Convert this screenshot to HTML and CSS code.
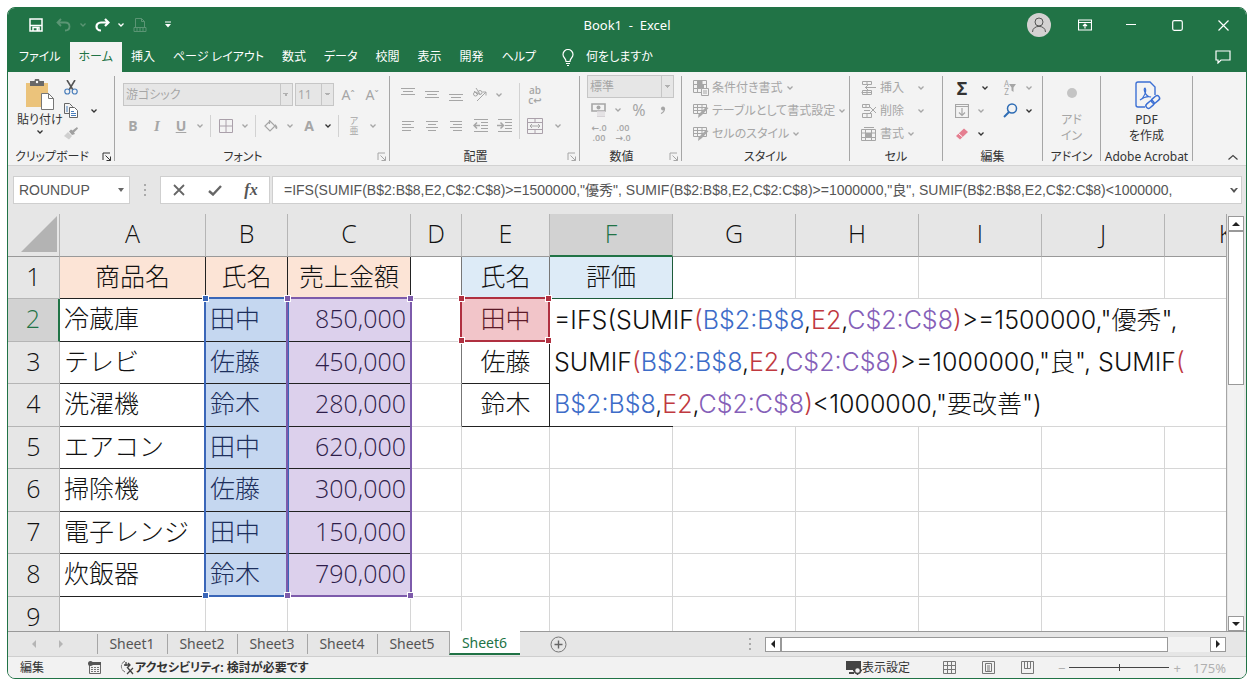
FILE: index.html
```html
<!DOCTYPE html>
<html lang="ja">
<head>
    <meta charset="UTF-8">
    <meta name="viewport" content="width=device-width, initial-scale=1.0">
    <title>Book1 - Excel</title>
    <link rel="stylesheet" href="styles.css">
</head>
<body>

    <!-- Shared icons -->
    <svg class="sprite" aria-hidden="true">
        <symbol id="chev" viewBox="0 0 8 8"><path d="M1.5 2.5 4 5l2.500-2.500" fill="none" stroke="currentColor" stroke-width="1.300"/></symbol>
        <symbol id="launch" viewBox="0 0 10 10"><path d="M1 8V1h7M3.500 3.500l5 5M8.500 4.500v4h-4" fill="none" stroke="currentColor"/></symbol>
        <symbol id="table-pen" viewBox="0 0 16 16"><path d="M.5 1.500h13v9H.5zM.5 4.500h13M.5 7.500h13M4.500 1.500v9M9 1.500v9" fill="none" stroke="currentColor"/><path d="M15.500 5 9 12l-4 3 .5-3.500L13 4z" fill="#a8a8a8"/></symbol>
    </svg>

    <div class="window">
        <header class="titlebar">
            <div class="quick">
                <button aria-label="上書き保存"><svg width="14" height="14" viewBox="0 0 14 14"><path d="M1 1h12v12H1z" fill="none" stroke="#fff" stroke-width="1.500"/><path d="M1 7.500h12M4 13V9.500h6V13" fill="none" stroke="#fff" stroke-width="1.500"/><path d="M7.500 10h1.500v3H7.500z" fill="#fff"/></svg></button>
                <button class="undo faded" aria-label="元に戻す"><svg width="16" height="14" viewBox="0 0 16 14"><path d="M5 1 1.500 4.500 5 8M2 4.500h7c6 0 6 8 0 8" fill="none" stroke="currentColor" stroke-width="1.800"/></svg></button>
                <button class="arrow faded" aria-label="元に戻す一覧"><svg width="8" height="8"><use href="#chev"/></svg></button>
                <button aria-label="やり直し"><svg width="16" height="14" viewBox="0 0 16 14"><path d="M11 1l3.500 3.500L11 8M14 4.500H7c-6 0-6 8 0 8" fill="none" stroke="#fff" stroke-width="2.200"/></svg></button>
                <button class="arrow" aria-label="やり直し一覧"><svg width="8" height="8"><use href="#chev"/></svg></button>
                <button class="faded" aria-label="PDF"><svg width="14" height="16" viewBox="0 0 14 16"><path d="M2.500 10V1.500h6l3 3V10M8.500 1.500v3h3M1 10.500h12v4H1zM4 10.500v4M7 10.500v4M10 10.500v4" fill="none" stroke="currentColor"/></svg></button>
                <button class="more" aria-label="カスタマイズ"><svg width="6" height="8" viewBox="0 0 6 8"><path d="M0 1h6" stroke="#fff"/><path d="M0 3h6L3 6.500z" fill="#fff"/></svg></button>
            </div>
            <div class="doc-name">Book1&nbsp; -&nbsp; Excel</div>
            <div class="controls">
                <button class="avatar" aria-label="アカウント"><svg width="24" height="24" viewBox="0 0 24 24"><circle cx="12" cy="12" r="12" fill="#d4d2d2"/><circle cx="12" cy="9" r="4" fill="none" stroke="#555"/><path d="M5.500 19c0-7.500 13-7.500 13 0" fill="none" stroke="#555"/></svg></button>
                <button aria-label="リボンの表示"><svg width="14" height="12" viewBox="0 0 14 12"><path d="M.5 1h13v10H.5zM.5 3.500h13M7 9.500v-4M5 7l2-2 2 2" fill="none" stroke="#fff" stroke-width="1.200"/></svg></button>
                <button aria-label="最小化"><svg width="10" height="10"><path d="M0 4.500h10" stroke="#fff" stroke-width="1.200"/></svg></button>
                <button aria-label="最大化"><svg width="11" height="11" viewBox="0 0 11 11"><rect x=".7" y=".7" width="9.600" height="9.600" rx="1.500" fill="none" stroke="#fff" stroke-width="1.200"/></svg></button>
                <button aria-label="閉じる"><svg width="11" height="11" viewBox="0 0 11 11"><path d="m.5.5 10 10m0-10-10 10" stroke="#fff" stroke-width="1.200"/></svg></button>
            </div>
        </header>

        <nav class="tabs">
            <a href="#">ファイル</a>
            <a href="#" class="active">ホーム</a>
            <a href="#">挿入</a>
            <a href="#">ページ レイアウト</a>
            <a href="#">数式</a>
            <a href="#">データ</a>
            <a href="#">校閲</a>
            <a href="#">表示</a>
            <a href="#">開発</a>
            <a href="#">ヘルプ</a>
            <a href="#" class="tell-me"><svg width="12" height="17" viewBox="0 0 12 17"><path d="M4 12.500C4 9 1 9 1 5.500a5 5 0 0 1 10 0C11 9 8 9 8 12.500zM4 14.500h4M5 16.500h2" fill="none" stroke="#fff" stroke-width="1.200"/></svg>何をしますか</a>
            <button class="comment" aria-label="コメント"><svg width="16" height="14" viewBox="0 0 16 14"><path d="M1 1h14v9H6l-3 3v-3H1z" fill="none" stroke="#fff" stroke-width="1.200"/></svg></button>
        </nav>

        <section class="ribbon">
            <div class="group g-clipboard">
                <div class="tools">
                    <button class="big">
                        <svg width="30" height="31" viewBox="0 0 30 31"><path d="M1 4h22v24H1z" fill="#ebc37b"/><path d="M5 2h4.500a2.500 2.500 0 0 1 5 0H19v5H5z" fill="#686868"/><circle cx="12" cy="3" r="1.200" fill="#fff"/><path d="M16.500 14.500h7l5 5v11h-12z" fill="#fff" stroke="#777"/><path d="M23.500 14.500v5h5" fill="none" stroke="#777"/></svg>
                        <span>貼り付け</span>
                        <svg width="8" height="8"><use href="#chev"/></svg>
                    </button>
                    <div class="stack">
                        <div class="row"><button aria-label="切り取り"><svg width="14" height="15" viewBox="0 0 14 15"><path d="M3 0l6 10M11 0 5 10" stroke="#555" stroke-width="1.600"/><circle cx="3.300" cy="11.500" r="2.500" fill="none" stroke="#4a7ebb" stroke-width="1.200"/><circle cx="10.700" cy="11.500" r="2.500" fill="none" stroke="#4a7ebb" stroke-width="1.200"/></svg></button></div>
                        <div class="row"><button aria-label="コピー"><svg width="14" height="15" viewBox="0 0 14 15"><path d="M.5.5h5l3 3v7h-8z" fill="#f3f3f3" stroke="#666"/><path d="M5.500 4.500h5l3 3v7h-8z" fill="#fff" stroke="#666"/><path d="M2 4h2M2 6h2M2 8h2M7 8.500h3M7 10.500h5M7 12.500h5" stroke="#4a7ebb"/></svg></button><button class="arrow" aria-label="コピー一覧"><svg width="8" height="8"><use href="#chev"/></svg></button></div>
                        <div class="row"><button aria-label="書式のコピー"><svg width="14" height="13" viewBox="0 0 14 13"><path d="M13 0l1 1.500-4 4 1 1.500-3 1-3-3.500 2-2 1.500 1z" fill="#a0a0a0"/><path d="m4 5 4 4-3 3.500L0 9z" fill="#cfcfcf"/></svg></button></div>
                    </div>
                </div>
                <div class="caption">クリップボード</div>
                <button class="launcher" aria-label="クリップボードの設定"><svg width="10" height="10"><use href="#launch"/></svg></button>
            </div>

            <div class="group g-font off">
                <div class="tools column">
                    <div class="row">
                        <select class="font-name" aria-label="フォント"><option>游ゴシック</option></select>
                        <select class="font-size" aria-label="フォント サイズ"><option>11</option></select>
                        <button class="glyph grow">A<sup>ˆ</sup></button>
                        <button class="glyph grow">A<sup>ˇ</sup></button>
                    </div>
                    <div class="row">
                        <button class="glyph bold">B</button>
                        <button class="glyph italic">I</button>
                        <button class="glyph under">U</button>
                        <button class="arrow" aria-label="下線"><svg width="8" height="8"><use href="#chev"/></svg></button>
                        <i class="sep"></i>
                        <button aria-label="罫線"><svg width="14" height="14"><path d="M.5.5h13v13H.5zM7 0v14M0 7h14" fill="none" stroke="#aaa0aa"/></svg></button>
                        <button class="arrow" aria-label="罫線一覧"><svg width="8" height="8"><use href="#chev"/></svg></button>
                        <i class="sep"></i>
                        <button aria-label="塗りつぶし"><svg width="14" height="14" viewBox="0 0 14 14"><path d="M5.500 1v4M1 7l5-5 5 5-5 5z" fill="none" stroke="currentColor" stroke-width="1.200"/><path d="M11 5c2 2 3 3 2 5-2 0-2-2-2-5z" fill="currentColor"/></svg></button>
                        <button class="arrow" aria-label="塗りつぶし一覧"><svg width="8" height="8"><use href="#chev"/></svg></button>
                        <button class="glyph bold">A</button>
                        <button class="arrow on" aria-label="文字の色"><svg width="8" height="8"><use href="#chev"/></svg></button>
                        <i class="sep"></i>
                        <button class="ruby"><span>ア</span><span>亜</span></button>
                        <button class="arrow" aria-label="ふりがな"><svg width="8" height="8"><use href="#chev"/></svg></button>
                    </div>
                </div>
                <div class="caption">フォント</div>
                <button class="launcher" aria-label="フォントの設定"><svg width="10" height="10"><use href="#launch"/></svg></button>
            </div>

            <div class="group g-align off">
                <div class="tools">
                    <div class="column">
                        <div class="row">
                            <button aria-label="上揃え"><svg width="14" height="14"><path d="M0 .5h14M2 3.500h10M0 6.500h14" stroke="currentColor"/></svg></button>
                            <button aria-label="上下中央揃え"><svg width="14" height="14"><path d="M0 3.500h14M2 6.500h10M0 9.500h14" stroke="currentColor"/></svg></button>
                            <button aria-label="下揃え"><svg width="14" height="14"><path d="M0 6.500h14M2 9.500h10M0 12.500h14" stroke="currentColor"/></svg></button>
                            <button aria-label="方向"><svg width="16" height="14" viewBox="0 0 16 14"><circle cx="3.500" cy="6" r="2" fill="none" stroke="currentColor"/><circle cx="8" cy="4.500" r="2" fill="none" stroke="currentColor"/><path d="M2 3l4 4M4 0l4 6M5 13l9-9M10.500 4H14v3.500" fill="none" stroke="currentColor"/></svg></button>
                            <button class="arrow" aria-label="方向一覧"><svg width="8" height="8"><use href="#chev"/></svg></button>
                        </div>
                        <div class="row">
                            <button aria-label="左揃え"><svg width="12" height="12"><path d="M0 1.500h12M0 4.500h9M0 7.500h12M0 10.500h9" stroke="currentColor"/></svg></button>
                            <button aria-label="中央揃え"><svg width="12" height="12"><path d="M0 1.500h12M2 4.500h8M0 7.500h12M2 10.500h8" stroke="currentColor"/></svg></button>
                            <button aria-label="右揃え"><svg width="12" height="12"><path d="M0 1.500h12M3 4.500h9M0 7.500h12M3 10.500h9" stroke="currentColor"/></svg></button>
                            <button aria-label="インデントを減らす"><svg width="15" height="13" viewBox="0 0 15 13"><path d="M1 .5h14M8 3.500h7M8 6.500h7M8 9.500h7M1 12.500h14" stroke="currentColor"/><path d="M7 6.500H1M4 3.500l-3 3 3 3" fill="none" stroke="currentColor" stroke-width="1.500"/></svg></button>
                            <button aria-label="インデントを増やす"><svg width="15" height="13" viewBox="0 0 15 13"><path d="M1 .5h14M8 3.500h7M8 6.500h7M8 9.500h7M1 12.500h14" stroke="currentColor"/><path d="M0 6.500h6M3.500 3.500l3 3-3 3" fill="none" stroke="currentColor" stroke-width="1.500"/></svg></button>
                        </div>
                    </div>
                    <i class="sep tall"></i>
                    <div class="column">
                        <div class="row"><button class="wrap-text"><span>ab</span><span>c↩</span></button></div>
                        <div class="row">
                            <button aria-label="セルを結合"><svg width="16" height="16" viewBox="0 0 16 16"><path d="M.5.500h15v15H.5zM.5 4.500h15M.5 11.500h15M8 .5v4M8 11.500v4" fill="none" stroke="#aaa0aa"/><path d="M3 8h10M5 6 3 8l2 2M11 6l2 2-2 2" fill="none" stroke="currentColor"/></svg></button>
                            <button class="arrow wide" aria-label="結合一覧"><svg width="8" height="8"><use href="#chev"/></svg></button>
                        </div>
                    </div>
                </div>
                <div class="caption">配置</div>
                <button class="launcher" aria-label="配置の設定"><svg width="10" height="10"><use href="#launch"/></svg></button>
            </div>

            <div class="group g-number off">
                <div class="stack">
                    <select class="format" aria-label="表示形式"><option>標準</option></select>
                    <div class="row">
                        <button aria-label="通貨"><svg width="16" height="16" viewBox="0 0 16 16"><path d="M1 2h13v7H1z" fill="none" stroke="currentColor" stroke-width="1.600"/><circle cx="7.500" cy="5.500" r="2" fill="currentColor"/><path d="M6 9h8v6H6z" fill="#d6d2d6"/><path d="M6 11h8M6 13h8" stroke="#f3f3f3"/></svg></button>
                        <button class="arrow" aria-label="通貨一覧"><svg width="8" height="8"><use href="#chev"/></svg></button>
                        <button class="glyph percent">%</button>
                        <button class="glyph bold" aria-label="桁区切り"><svg width="6" height="8" viewBox="0 0 6 8"><circle cx="3" cy="2.500" r="2" fill="currentColor"/><path d="M4.500 2.500C4.500 5 3.500 6.500 1 7.500" fill="none" stroke="currentColor" stroke-width="1.200"/></svg></button>
                    </div>
                    <div class="row">
                        <button class="digits"><span>←.0</span><span>.00</span></button>
                        <button class="digits"><span>.00</span><span>→.0</span></button>
                    </div>
                </div>
                <div class="caption">数値</div>
                <button class="launcher" aria-label="数値の設定"><svg width="10" height="10"><use href="#launch"/></svg></button>
            </div>

            <div class="group g-style off">
                <div class="stack">
                    <button class="item"><svg width="16" height="16" viewBox="0 0 16 16"><path d="M.5.500h13v12H.5zM.5 4.500h13M.5 8.500h13M4.500.5v12M9 .5v12" fill="none" stroke="currentColor"/><path d="M5 1h4v3H5zM5 5h6v3H5z" fill="currentColor"/><path d="M8.500 8.500h7v7h-7z" fill="#f3f3f3" stroke="currentColor"/><path d="M10 11h4M10 13h4" stroke="currentColor"/></svg>条件付き書式<svg width="8" height="8"><use href="#chev"/></svg></button>
                    <button class="item"><svg width="16" height="16"><use href="#table-pen"/></svg>テーブルとして書式設定<svg width="8" height="8"><use href="#chev"/></svg></button>
                    <button class="item"><svg width="16" height="16"><use href="#table-pen"/></svg>セルのスタイル<svg width="8" height="8"><use href="#chev"/></svg></button>
                </div>
                <div class="caption">スタイル</div>
            </div>

            <div class="group g-cells off">
                <div class="stack">
                    <button class="item"><svg width="16" height="16" viewBox="0 0 16 16"><path d="M1.500 1.500h9v3h-9zM1.500 10.500h9v4h-9zM6 1.500v3M6 10.500v4M.5 12.500h10M4 7.500h11M7 5 4.500 7.500 7 10" fill="none" stroke="currentColor"/></svg>挿入<svg class="far" width="8" height="8"><use href="#chev"/></svg></button>
                    <button class="item"><svg width="16" height="16" viewBox="0 0 16 16"><path d="M1.500 1.500h7v3h-7zM1.500 10.500h9v4h-9zM5 1.500v3M6 10.500v4M3 7.500h6M9 4l6 6M15 4l-6 6" fill="none" stroke="currentColor"/></svg>削除<svg class="far" width="8" height="8"><use href="#chev"/></svg></button>
                    <button class="item"><svg width="16" height="16" viewBox="0 0 16 16"><path d="M.5 3.500h14v11H.5zM.5 7h14M.5 11.500h14M4.500 3.500v11M10.500 3.500v11M3 1.500h10" fill="none" stroke="currentColor"/><path d="M5 7h5v4H5z" fill="currentColor"/></svg>書式<svg width="8" height="8"><use href="#chev"/></svg></button>
                </div>
                <div class="caption">セル</div>
            </div>

            <div class="group g-edit">
                <div class="stack">
                    <div class="row">
                        <button class="sigma">Σ</button>
                        <button class="arrow wide" aria-label="合計一覧"><svg width="8" height="8"><use href="#chev"/></svg></button>
                        <button class="sort off"><span>A<br>Z</span><svg width="7" height="8" viewBox="0 0 7 8"><path d="M0 0h7L4.500 3.500V8l-2-1.500v-3z" fill="currentColor"/></svg></button>
                        <button class="arrow off" aria-label="並べ替え"><svg width="8" height="8"><use href="#chev"/></svg></button>
                    </div>
                    <div class="row">
                        <button class="off" aria-label="フィル"><svg width="14" height="14" viewBox="0 0 14 14"><path d="M.5.500h13v13H.5zM.5 2.500h13M7 4v7M4 8.500 7 11.500l3-3" fill="none" stroke="currentColor" stroke-width="1.200"/></svg></button>
                        <button class="arrow off" aria-label="フィル一覧"><svg width="8" height="8"><use href="#chev"/></svg></button>
                        <button class="find" aria-label="検索"><svg width="15" height="15" viewBox="0 0 15 15"><circle cx="9" cy="5.500" r="4.500" fill="none" stroke="#2f6db5" stroke-width="1.500"/><path d="M6 9 1 14" stroke="#2f6db5" stroke-width="2"/></svg></button>
                        <button class="arrow" aria-label="検索一覧"><svg width="8" height="8"><use href="#chev"/></svg></button>
                    </div>
                    <div class="row">
                        <button aria-label="クリア"><svg width="14" height="12" viewBox="0 0 14 12"><path d="m1 8 8-7.500L13 4l-8 7.500z" fill="#e57e90"/><path d="m3.500 5.500 4 3.500" stroke="#fff"/></svg></button>
                        <button class="arrow" aria-label="クリア一覧"><svg width="8" height="8"><use href="#chev"/></svg></button>
                    </div>
                </div>
                <div class="caption">編集</div>
            </div>

            <div class="group g-addin off">
                <button class="big"><svg width="30" height="31" viewBox="0 0 30 31"><circle cx="15" cy="14" r="5" fill="#c4c4c4"/></svg><span>アド<br>イン</span></button>
                <div class="caption">アドイン</div>
            </div>

            <div class="group g-acrobat">
                <button class="big"><svg width="30" height="31" viewBox="0 0 30 31"><path d="M13 28H6a2 2 0 0 1-2-2V5a2 2 0 0 1 2-2h12l5 5v8" fill="none" stroke="#3b6fd4" stroke-width="1.400"/><path d="M8 21c4-2 7-9 5-12-2 0 0 9 6 9-3-1-7 0-11 3z" fill="none" stroke="#3b6fd4" stroke-width="1.200"/><g fill="none" stroke="#3b6fd4" stroke-width="1.500"><rect x="13.500" y="23" width="9" height="5" rx="2.500" transform="rotate(-40 18 25.500)"/><rect x="19" y="18" width="9" height="5" rx="2.500" transform="rotate(-40 23.500 20.500)"/></g></svg><span>PDF<br>を作成</span></button>
                <div class="caption">Adobe Acrobat</div>
            </div>
            <button class="collapse" aria-label="リボンを折りたたむ"><svg width="10" height="6" viewBox="0 0 10 6"><path d="m.5 5.500 4.500-4 4.500 4" fill="none" stroke="#444" stroke-width="1.200"/></svg></button>
        </section>

        <div class="formula-bar">
            <div class="name-box">
                <input type="text" value="ROUNDUP" aria-label="名前ボックス">
                <svg width="6" height="4"><path d="M0 0h6L3 4z" fill="#666"/></svg>
            </div>
            <span class="dots"></span>
            <div class="fx-buttons">
                <button aria-label="キャンセル"><svg width="12" height="12"><path d="m1 1 10 10M11 1 1 11" stroke="#666" stroke-width="1.800"/></svg></button>
                <button aria-label="入力"><svg width="14" height="11"><path d="m1 6 4 3.500L13 1" fill="none" stroke="#666" stroke-width="2.400"/></svg></button>
                <button class="fx">fx</button>
            </div>
            <div class="formula">
                <input type="text" aria-label="数式バー" value='=IFS(SUMIF(B$2:B$8,E2,C$2:C$8)>=1500000,"優秀", SUMIF(B$2:B$8,E2,C$2:C$8)>=1000000,"良", SUMIF(B$2:B$8,E2,C$2:C$8)<1000000,'>
                <svg width="8" height="6"><path d="M0 1h2l2 2 2-2h2L4 6z" fill="#555"/></svg>
            </div>
        </div>

        <main class="sheet">
            <div class="viewport">
                <table>
                    <colgroup>
                        <col class="c-head"><col class="c-a"><col class="c-b"><col class="c-std"><col class="c-d"><col class="c-e"><col class="c-std"><col class="c-std"><col class="c-std"><col class="c-std"><col class="c-std"><col class="c-std">
                    </colgroup>
                    <thead>
                        <tr>
                            <th class="corner"><svg width="36" height="36"><path d="M36 0v36H0z" fill="#b3b3b3"/></svg></th>
                            <th>A</th><th>B</th><th>C</th><th>D</th><th>E</th><th class="current">F</th><th>G</th><th>H</th><th>I</th><th>J</th><th>K</th>
                        </tr>
                    </thead>
                    <tbody>
                        <tr><th>1</th><td class="box head">商品名</td><td class="box head">氏名</td><td class="box head">売上金額</td><td class="edge"></td><td class="box head2 edge">氏名</td><td class="box head2 above">評価</td><td></td><td></td><td></td><td></td><td></td></tr>
                        <tr>
                            <th class="current">2</th><td class="box">冷蔵庫</td>
                            <td class="box blue">田中<div class="range r-blue"><i></i><i></i><i></i><i></i></div></td>
                            <td class="box violet">850,000<div class="range r-violet"><i></i><i></i><i></i><i></i></div></td>
                            <td class="edge"></td>
                            <td class="box red">田中<div class="range r-red"><i></i><i></i><i></i><i></i></div></td>
                            <td class="box">
                                <div class="editor">=IFS(SUMIF<b class="t-red">(</b><b class="t-blue">B$2:B$8</b>,<b class="t-red">E2</b>,<b class="t-violet">C$2:C$8</b><b class="t-red">)</b>&gt;=1500000,"優秀",<br>SUMIF<b class="t-red">(</b><b class="t-blue">B$2:B$8</b>,<b class="t-red">E2</b>,<b class="t-violet">C$2:C$8</b><b class="t-red">)</b>&gt;=1000000,"良", SUMIF<b class="t-red">(</b><br><b class="t-blue">B$2:B$8</b>,<b class="t-red">E2</b>,<b class="t-violet">C$2:C$8</b><b class="t-red">)</b>&lt;1000000,"要改善")</div>
                            </td>
                            <td></td><td></td><td></td><td></td><td></td>
                        </tr>
                        <tr><th>3</th><td class="box">テレビ</td><td class="box blue">佐藤</td><td class="box violet">450,000</td><td class="edge"></td><td class="box center">佐藤</td><td class="box"></td><td></td><td></td><td></td><td></td><td></td></tr>
                        <tr><th>4</th><td class="box">洗濯機</td><td class="box blue">鈴木</td><td class="box violet">280,000</td><td class="edge"></td><td class="box center">鈴木</td><td class="box"></td><td></td><td></td><td></td><td></td><td></td></tr>
                        <tr><th>5</th><td class="box">エアコン</td><td class="box blue">田中</td><td class="box violet">620,000</td><td></td><td></td><td></td><td></td><td></td><td></td><td></td><td></td></tr>
                        <tr><th>6</th><td class="box">掃除機</td><td class="box blue">佐藤</td><td class="box violet">300,000</td><td></td><td></td><td></td><td></td><td></td><td></td><td></td><td></td></tr>
                        <tr><th>7</th><td class="box">電子レンジ</td><td class="box blue">田中</td><td class="box violet">150,000</td><td></td><td></td><td></td><td></td><td></td><td></td><td></td><td></td></tr>
                        <tr><th>8</th><td class="box">炊飯器</td><td class="box blue">鈴木</td><td class="box violet">790,000</td><td></td><td></td><td></td><td></td><td></td><td></td><td></td><td></td></tr>
                        <tr><th>9</th><td></td><td></td><td></td><td></td><td></td><td></td><td></td><td></td><td></td><td></td><td></td></tr>
                    </tbody>
                </table>
            </div>
            <div class="vscroll">
                <button aria-label="上へ"><svg width="8" height="4"><path d="M0 4h8L4 0z" fill="#222"/></svg></button>
                <div class="thumb"></div>
                <button class="end" aria-label="下へ"><svg width="8" height="4"><path d="M0 0h8L4 4z" fill="#222"/></svg></button>
            </div>
        </main>

        <div class="sheet-tabs">
            <div class="nav">
                <button aria-label="前のシート"><svg width="4" height="8"><path d="M4 0v8L0 4z" fill="#b5b5b5"/></svg></button>
                <button aria-label="次のシート"><svg width="4" height="8"><path d="M0 0v8l4-4z" fill="#b5b5b5"/></svg></button>
            </div>
            <button class="tab">Sheet1</button>
            <button class="tab">Sheet2</button>
            <button class="tab">Sheet3</button>
            <button class="tab">Sheet4</button>
            <button class="tab">Sheet5</button>
            <button class="tab selected">Sheet6</button>
            <button class="add" aria-label="新しいシート"><svg width="17" height="17" viewBox="0 0 17 17"><circle cx="8.500" cy="8.500" r="7.500" fill="none" stroke="#777"/><path d="M8.500 4.500v8M4.500 8.500h8" stroke="#666" stroke-width="1.400"/></svg></button>
            <span class="dots"></span>
            <div class="hscroll">
                <button aria-label="左へ"><svg width="4" height="8"><path d="M4 0v8L0 4z" fill="#222"/></svg></button>
                <div class="thumb"></div>
                <button class="end" aria-label="右へ"><svg width="4" height="8"><path d="M0 0v8l4-4z" fill="#222"/></svg></button>
            </div>
        </div>

        <footer class="status">
            <span class="mode">編集</span>
            <svg class="macro" width="13" height="13" viewBox="0 0 13 13"><path d="M1.500 2.500h11v10h-11z" fill="none" stroke="#666"/><path d="M4 1h9v3H4z" fill="#555"/><circle cx="2.500" cy="2.500" r="2.500" fill="#555"/><path d="M3 6.500h8M3 8.500h8M3 10.500h8" stroke="#777" stroke-dasharray="2 1"/></svg>
            <button class="access"><svg width="16" height="15" viewBox="0 0 16 15"><path d="M6 1a6 6 0 0 0 0 11" fill="none" stroke="#666" stroke-dasharray="4 1"/><path d="M7 2v4M5 5h6M9 3l2 2-2 2M8 7l6 7M14 8l-6 6" fill="none" stroke="#444" stroke-width="1.300"/></svg>アクセシビリティ: 検討が必要です</button>
            <button class="display"><svg width="16" height="15" viewBox="0 0 16 15"><path d="M0 1h15v9H0zM3 12h5v2H3z" fill="#444"/><circle cx="11.500" cy="10.500" r="3" fill="#f2f2f2" stroke="#444" stroke-width="1.500"/><path d="M11.500 6v2M11.500 13v2M7 10.500h2M14 10.500h2" stroke="#444" stroke-width="1.500"/></svg>表示設定</button>
            <button class="view" aria-label="標準"><svg width="13" height="13"><path d="M.5.500h12v12H.5zM.5 4.500h12M.5 8.500h12M4.500.5v12M8.500.5v12" fill="none" stroke="#777"/></svg></button>
            <button class="view" aria-label="ページ レイアウト"><svg width="13" height="13"><path d="M.5.500h12v12H.5zM3.500 2.500h6v8h-6zM5 5h3M5 7h3M5 9h3" fill="none" stroke="#777"/></svg></button>
            <button class="view" aria-label="改ページ プレビュー"><svg width="13" height="13"><path d="M.5.500h12v12H.5zM3.500.5v7h6v-7M6.500.5v7" fill="none" stroke="#777"/></svg></button>
            <div class="zoom">
                <span>−</span>
                <input type="range" min="10" max="340" value="175" aria-label="ズーム">
                <span>+</span>
                <span class="level">175%</span>
            </div>
        </footer>
    </div>

</body>
</html>
```

FILE: styles.css
```css
* {
    box-sizing: border-box;
}
body {
    margin: 0;
    padding: 7px 7px 8px;
    height: 100vh;
    background-color: #fff;
    font-family: "Noto Sans", "Noto Sans CJK JP", sans-serif;
    font-size: 12px;
    line-height: 16px;
    color: #333;
}
button, input, select {
    font: inherit;
    color: inherit;
    border: 0;
    padding: 0;
    margin: 0;
    background: none;
}
button {
    display: flex;
    align-items: center;
    justify-content: center;
}
svg {
    display: block;
    flex: none;
}
.sprite {
    position: absolute;
    width: 0;
    height: 0;
}
.window {
    display: flex;
    flex-direction: column;
    height: 100%;
    border: 1px solid #217346;
    border-radius: 8px;
    overflow: hidden;
    background-color: #e6e6e6;
}

/* Title bar */
.titlebar {
    display: grid;
    grid-template-columns: 1fr auto 1fr;
    align-items: center;
    height: 34px;
    background-color: #217346;
    color: #fff;
}
.doc-name {
    font-size: 13px;
}
.quick {
    display: flex;
    padding-left: 16px;
}
.quick button {
    width: 24px;
    height: 24px;
}
.quick .undo {
    margin-left: 4px;
}
.quick .arrow {
    width: 14px;
}
.quick .more {
    width: 32px;
}
.quick .faded {
    color: #5b9574;
}
.controls {
    display: flex;
    justify-content: flex-end;
}
.controls button {
    width: 46px;
    height: 32px;
}

/* Tabs */
.tabs {
    display: flex;
    height: 30px;
    padding-left: 2px;
    background-color: #217346;
    font-feature-settings: "palt";
}
.tabs a {
    display: flex;
    align-items: center;
    padding: 0 9px;
    color: #fff;
    text-decoration: none;
    white-space: nowrap;
}
.tabs .active {
    background-color: #f3f3f3;
    color: #217346;
}
.tell-me {
    gap: 12px;
    margin-left: 8px;
}
.comment {
    width: 46px;
    margin-left: auto;
}

/* Ribbon */
.ribbon {
    display: flex;
    position: relative;
    height: 94px;
    padding: 4px 0;
    background-color: #f3f3f3;
    border-bottom: 1px solid #d2d2d2;
    font-feature-settings: "palt";
}
.group {
    display: flex;
    flex-direction: column;
    position: relative;
    border-right: 1px solid #a6a6a6;
}
.caption {
    margin-top: auto;
    text-align: center;
    white-space: nowrap;
    line-height: 8px;
}
.tools, .row {
    display: flex;
}
.row {
    align-items: center;
    height: 23px;
}
.column .row {
    height: 31px;
}
.group button {
    width: 24px;
    height: 22px;
    flex: none;
}
.group .arrow {
    width: 14px;
}
.group .arrow.wide {
    width: 22px;
}
.group .launcher {
    position: absolute;
    right: 2px;
    bottom: -2px;
    width: 10px;
    height: 12px;
}
.off {
    color: #a6a6a6;
}
.off .caption, .arrow.on {
    color: #333;
}
.sep {
    width: 1px;
    height: 22px;
    margin: 0 3px;
    background-color: #d2d2d2;
}
.sep.tall {
    height: 56px;
    margin: 4px 3px;
}
.group .big {
    flex-direction: column;
    justify-content: flex-start;
    width: auto;
    height: 66px;
    padding-top: 3px;
}
.big span {
    margin-top: 2px;
}
.g-clipboard {
    width: 107px;
}
.g-clipboard .tools {
    padding-left: 9px;
}
.g-clipboard .caption {
    padding-right: 18px;
}
.g-clipboard .stack {
    margin-left: -4px;
}
.g-clipboard .stack .arrow {
    width: 22px;
}
.g-font {
    width: 275px;
}
.g-font .tools, .g-align .tools {
    padding-left: 6px;
}
.g-font .tools {
    flex-direction: column;
    padding-top: 3px;
}
.g-align .tools {
    padding-top: 3px;
}
.g-font .caption, .g-align .caption, .g-number .caption {
    padding-right: 18px;
}
.group select {
    appearance: none;
    height: 23px;
    padding-left: 2px;
    border: 1px solid #c6c6c6;
    background: linear-gradient(#c6c6c6, #c6c6c6) right 11px top / 1px 100% no-repeat, conic-gradient(from -45deg at 50% 100%, #b0b0b0 90deg, transparent 0) right 3px center / 6px 3px no-repeat, #e6e6e6;
    opacity: 1;
}
.group .font-name {
    width: 170px;
    margin: 0 2px;
}
.group .font-size {
    width: 39px;
}
.group .glyph {
    font-size: 14px;
}
.glyph sup {
    font-size: 10px;
    line-height: 10px;
}
.group .grow {
    padding-left: 4px;
}
.group .bold {
    font-weight: bold;
}
.group .italic {
    font-family: "Liberation Serif", serif;
    font-style: italic;
    font-weight: bold;
    font-size: 15px;
}
.under {
    text-decoration: underline;
    font-weight: bold;
}
.group .percent {
    font-size: 16px;
    margin-left: 2px;
}
.group .ruby, .group .wrap-text, .group .digits {
    flex-direction: column;
    font-family: "Open Sans", "DejaVu Sans", "Noto Sans CJK JP", sans-serif;
    font-size: 9px;
    line-height: 10px;
}
.group .wrap-text {
    font-size: 10px;
    font-weight: 600;
}
.group .digits {
    font-weight: 600;
}
.g-align {
    width: 190px;
}
.g-number {
    width: 102px;
}
.g-number .stack {
    padding-left: 7px;
    margin-top: -1px;
}
.g-number .format {
    width: 87px;
}
.g-style {
    width: 168px;
}
.g-style .stack, .g-cells .stack {
    padding-left: 11px;
}
.group .item {
    justify-content: flex-start;
    gap: 3px;
    width: auto;
    height: 23px;
    white-space: nowrap;
}
.g-cells {
    width: 93px;
}
.far {
    margin-left: 10px;
}
.g-edit {
    width: 100px;
}
.g-edit .stack {
    padding-left: 7px;
}
.group .sigma {
    font-size: 18px;
    font-weight: bold;
}
.group .sort {
    margin-left: 2px;
    font-size: 8px;
    line-height: 8px;
}
.group .find {
    margin-left: 10px;
}
.g-addin {
    width: 58px;
}
.g-acrobat {
    width: 92px;
}
.collapse {
    align-self: flex-end;
    margin-left: auto;
    width: 27px;
    height: 8px;
}

/* Formula bar */
.formula-bar {
    display: flex;
    align-items: center;
    height: 48px;
    padding: 0 4px 0 5px;
    color: #555;
    font-family: "Liberation Sans", "Noto Sans CJK JP", sans-serif;
    font-size: 14px;
}
.name-box, .fx-buttons, .formula {
    display: flex;
    align-items: center;
    height: 28px;
    background-color: #fff;
    border: 1px solid #cfcfcf;
}
.name-box {
    width: 117px;
    padding: 0 5px;
}
.name-box input {
    width: 100%;
}
.dots {
    width: 2px;
    height: 12px;
    background: repeating-linear-gradient(#aaa 0 2px, transparent 2px 5px);
}
.formula-bar .dots {
    margin: 0 14px;
}
.fx-buttons {
    width: 110px;
}
.fx-buttons button {
    flex: 1;
    height: 26px;
}
.fx-buttons .fx {
    font-family: "Liberation Serif", serif;
    font-style: italic;
    font-weight: bold;
    font-size: 16px;
}
.formula {
    flex: 1;
    margin-left: 2px;
    padding: 0 3px 0 11px;
}
.formula input {
    flex: 1;
    min-width: 0;
}

/* Grid */
.sheet {
    display: flex;
    flex: 1;
    min-height: 0;
}
.viewport {
    flex: 1;
    min-width: 0;
    overflow: hidden;
    border-right: 1px solid #a6a6a6;
    background-color: #fff;
}
table {
    width: 1158px;
    table-layout: fixed;
    border-collapse: separate;
    border-spacing: 0;
    font-family: "Open Sans", "Noto Sans CJK JP", sans-serif;
    font-weight: 300;
    font-size: 25px;
    line-height: 36px;
    color: #111;
}
.c-head {
    width: 52px;
}
.c-a {
    width: 146px;
}
.c-b {
    width: 82px;
}
.c-std {
    width: 123px;
}
.c-d {
    width: 51px;
}
.c-e {
    width: 88px;
}
th, td {
    position: relative;
    height: 42px;
    padding: 0 4px 4px;
    border-right: 1px solid #d6d6d6;
    border-bottom: 1px solid #d6d6d6;
    white-space: nowrap;
}
tr:nth-child(even) > *, thead th {
    height: 43px;
}
th {
    font-weight: 300;
    background-color: #e6e6e6;
    border-color: #b5b5b5;
}
thead th {
    border-bottom-color: #999;
}
th.current {
    background-color: #d2d2d2;
    color: #217346;
}
thead .current {
    border-bottom: 2px solid #217346;
}
tbody .current {
    border-right: 2px solid #217346;
}
.corner svg {
    margin: 2px 0 0 9px;
}
.box {
    border-color: #222;
}
.head {
    background-color: #fce4d6;
    text-align: center;
}
.head2 {
    background-color: #ddebf7;
    text-align: center;
}
.above {
    border-color: #1d5c3a;
}
.center {
    text-align: center;
}
.blue {
    background-color: #c5d7f0;
    color: #1d2f5c;
}
.violet {
    background-color: #dcd0ec;
    text-align: right;
    color: #2e1d4a;
}
.red {
    background-color: #f2c5c9;
    text-align: center;
    color: #5c1a28;
}
.edge {
    border-right-color: #777;
}

/* Coloured outlines of the ranges used in the formula */
.range {
    position: absolute;
    z-index: 2;
    top: -2px;
    left: -2px;
    right: -2px;
    height: 300px;
    border: 2px solid;
}
.range i {
    position: absolute;
    width: 5px;
    height: 5px;
    background-color: currentColor;
    outline: 1px solid #fff;
}
.range i:nth-child(1) {
    top: -3px;
    left: -3px;
}
.range i:nth-child(2) {
    top: -3px;
    right: -3px;
}
.range i:nth-child(3) {
    bottom: -3px;
    left: -3px;
}
.range i:nth-child(4) {
    bottom: -3px;
    right: -3px;
}
.r-blue {
    color: #3a66b8;
}
.r-violet {
    color: #7d5bab;
}
.r-red {
    right: -1px;
    height: 45px;
    color: #b03040;
}

/* Cell editor spreading over the neighbouring cells */
.editor {
    position: absolute;
    z-index: 1;
    top: 0;
    left: 0;
    width: 700px;
    height: 127px;
    padding: 0 4px;
    background-color: #fff;
    font-family: Inter, "Noto Sans CJK JP", sans-serif;
    line-height: 42px;
}
.editor b {
    font-weight: 300;
}
.t-red {
    color: #c0393f;
}
.t-blue {
    color: #3d6cc8;
}
.t-violet {
    color: #8560b8;
}

/* Scroll bars */
.vscroll, .hscroll {
    display: flex;
    background-color: #f2f2f2;
}
.vscroll {
    flex-direction: column;
    width: 16px;
    margin: 2px 2px 0 1px;
}
.vscroll button, .hscroll button {
    width: 16px;
    height: 15px;
    background-color: #fff;
    border: 1px solid #999;
}
.thumb {
    background-color: #fff;
    border: 1px solid #999;
}
.vscroll .thumb {
    height: 37%;
}
.vscroll .end {
    margin-top: auto;
}

/* Sheet tabs */
.sheet-tabs {
    display: flex;
    align-items: center;
    height: 26px;
    padding-right: 20px;
    border-top: 1px solid #999;
    border-bottom: 1px solid #cfcfcf;
    font-size: 14px;
    color: #555;
}
.nav {
    display: flex;
    justify-content: space-between;
    width: 89px;
    padding: 0 34px 0 24px;
}
.tab {
    width: 70px;
    height: 20px;
    padding-right: 1px;
    border-left: 1px solid #a6a6a6;
}
.tab.selected {
    width: 71px;
    height: 24px;
    margin: -2px 0 0 2px;
    padding-top: 2px;
    background-color: #fff;
    border-bottom: 2px solid #217346;
    color: #217346;
}
.add {
    margin-left: 30px;
}
.sheet-tabs .dots {
    margin-left: auto;
    margin-right: 14px;
}
.hscroll {
    width: 461px;
    height: 15px;
}
.hscroll .thumb {
    width: 387px;
}
.hscroll .end {
    margin-left: auto;
}

/* Status bar */
.status {
    display: flex;
    align-items: center;
    height: 21px;
    padding: 0 20px 0 12px;
    background-color: #f2f2f2;
    font-feature-settings: "palt";
}
.macro {
    margin: 0 18px 0 44px;
}
.access {
    font-weight: bold;
}
.display {
    margin-left: auto;
    margin-right: 33px;
}
.view {
    width: 13px;
    margin-right: 26px;
}
.zoom {
    display: flex;
    align-items: center;
    gap: 4px;
    margin-left: -2px;
    color: #b0b0b0;
    font-size: 13px;
}
.zoom input {
    appearance: none;
    width: 100px;
    height: 1px;
    background-color: #444;
}
.zoom input::-webkit-slider-thumb {
    appearance: none;
    width: 1px;
    height: 7px;
    background-color: #444;
}
.level {
    margin-left: 8px;
}
```
